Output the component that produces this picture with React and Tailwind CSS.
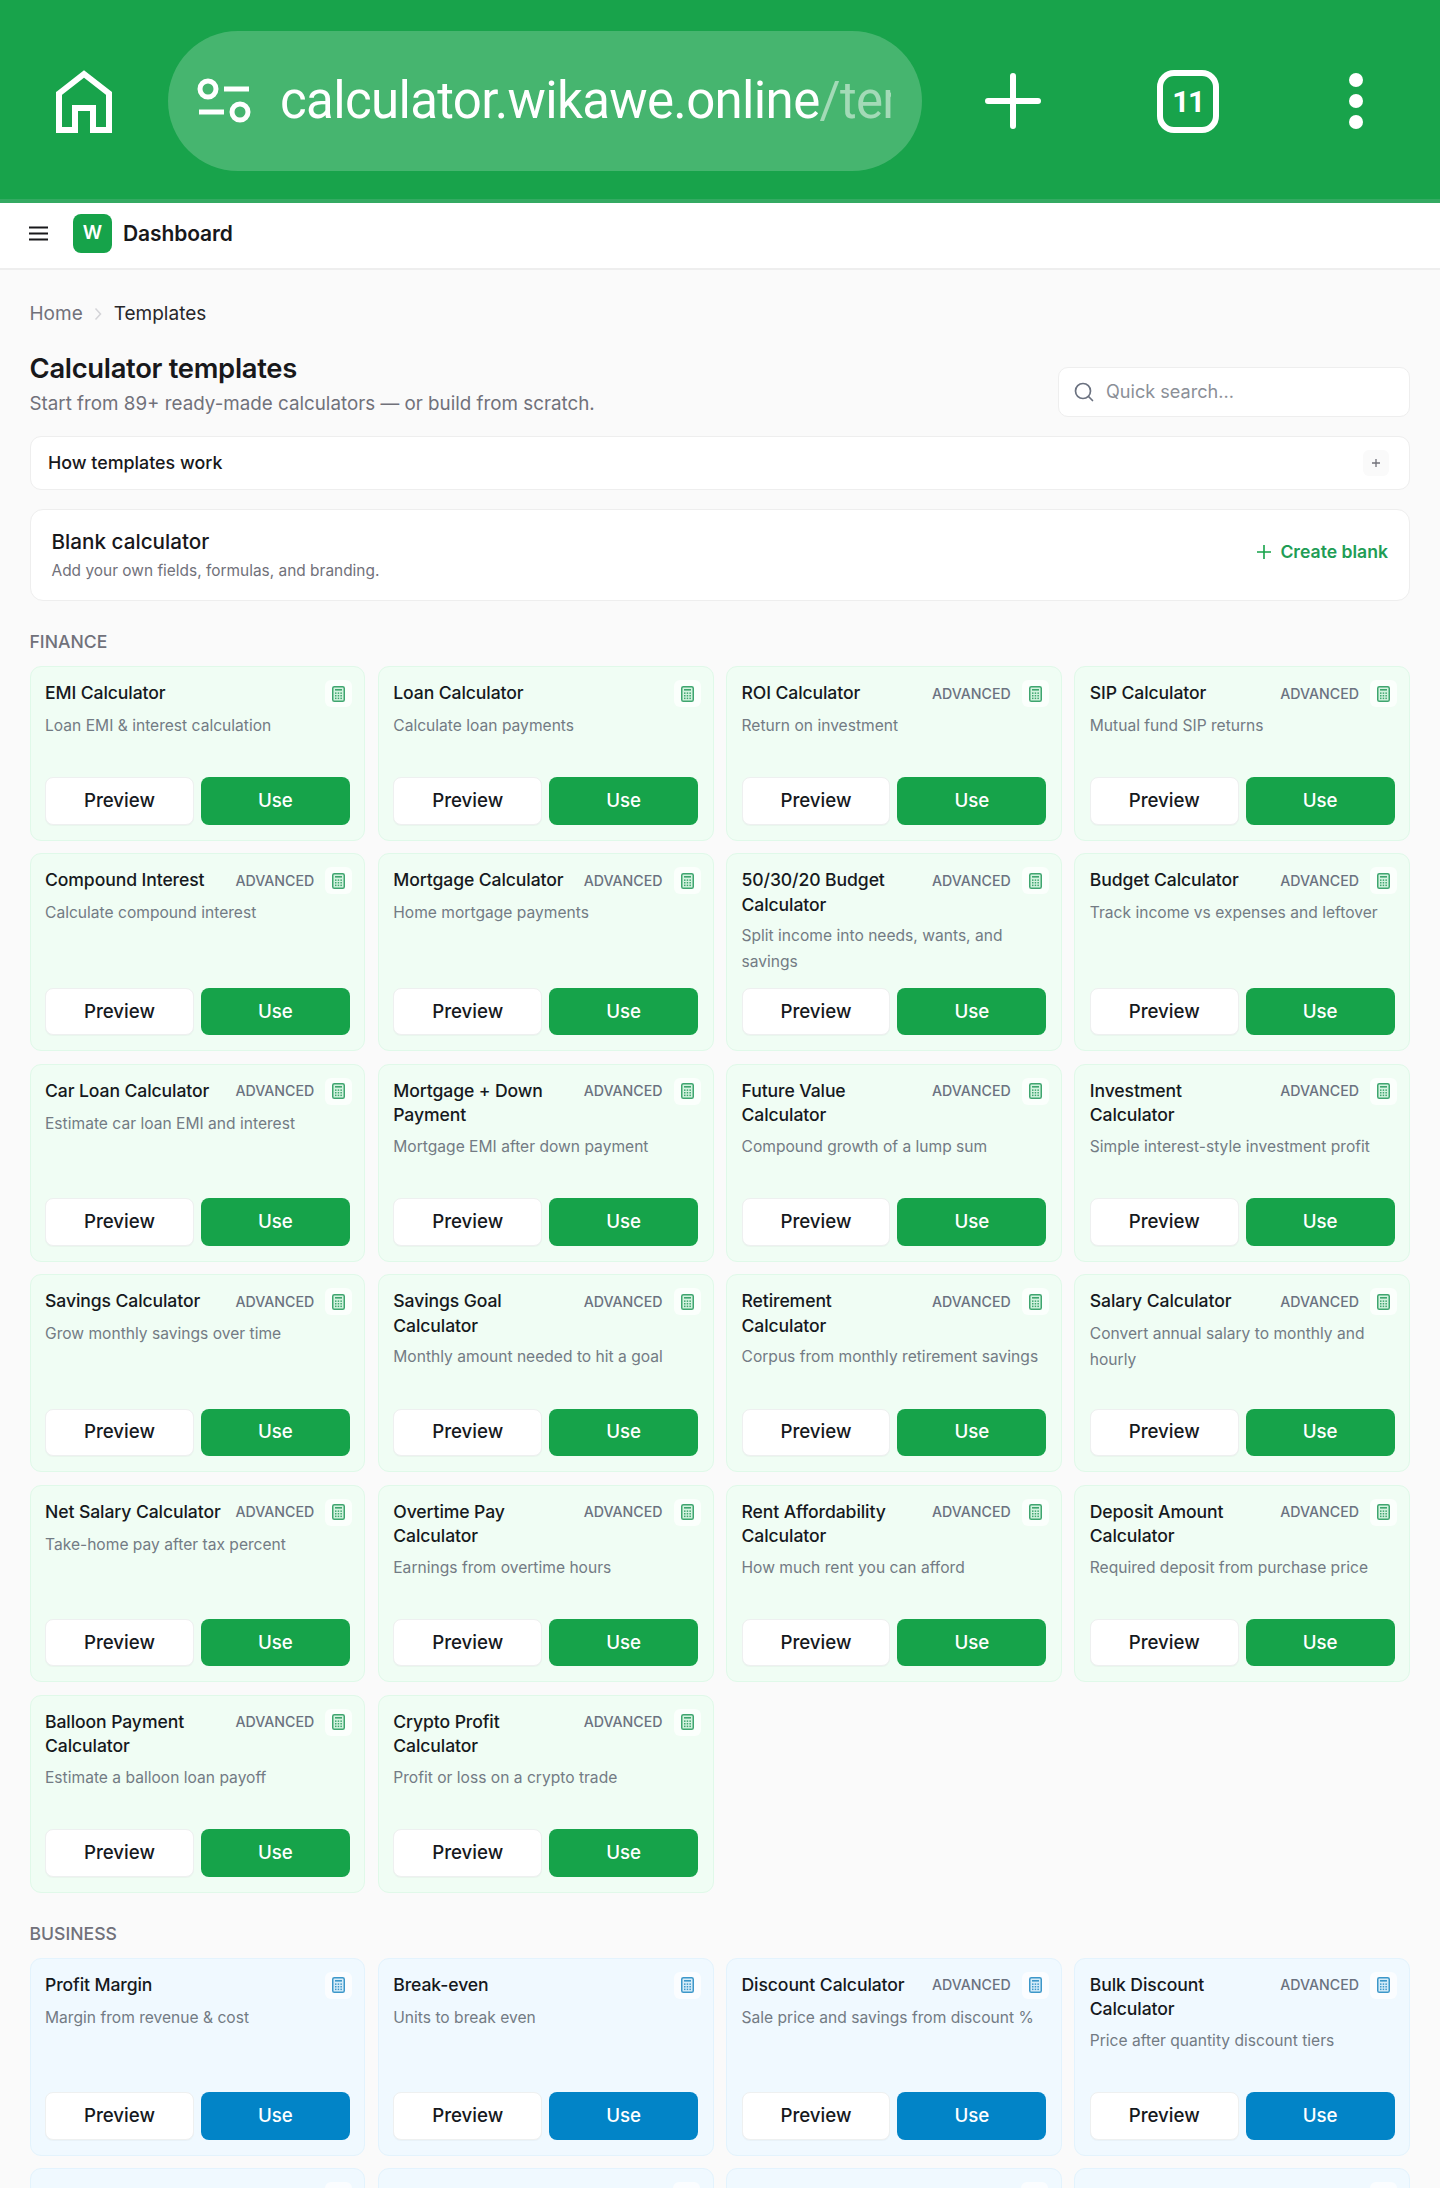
const finance = [
  ["EMI Calculator", "Loan EMI & interest calculation", false],
  ["Loan Calculator", "Calculate loan payments", false],
  ["ROI Calculator", "Return on investment", true],
  ["SIP Calculator", "Mutual fund SIP returns", true],
  ["Compound Interest", "Calculate compound interest", true],
  ["Mortgage Calculator", "Home mortgage payments", true],
  ["50/30/20 Budget\nCalculator", "Split income into needs, wants, and\nsavings", true],
  ["Budget Calculator", "Track income vs expenses and leftover", true],
  ["Car Loan Calculator", "Estimate car loan EMI and interest", true],
  ["Mortgage + Down\nPayment", "Mortgage EMI after down payment", true],
  ["Future Value\nCalculator", "Compound growth of a lump sum", true],
  ["Investment\nCalculator", "Simple interest-style investment profit", true],
  ["Savings Calculator", "Grow monthly savings over time", true],
  ["Savings Goal\nCalculator", "Monthly amount needed to hit a goal", true],
  ["Retirement\nCalculator", "Corpus from monthly retirement savings", true],
  ["Salary Calculator", "Convert annual salary to monthly and\nhourly", true],
  ["Net Salary Calculator", "Take-home pay after tax percent", true],
  ["Overtime Pay\nCalculator", "Earnings from overtime hours", true],
  ["Rent Affordability\nCalculator", "How much rent you can afford", true],
  ["Deposit Amount\nCalculator", "Required deposit from purchase price", true],
  ["Balloon Payment\nCalculator", "Estimate a balloon loan payoff", true],
  ["Crypto Profit\nCalculator", "Profit or loss on a crypto trade", true],
];

const business = [
  ["Profit Margin", "Margin from revenue & cost", false],
  ["Break-even", "Units to break even", false],
  ["Discount Calculator", "Sale price and savings from discount %", true],
  ["Bulk Discount\nCalculator", "Price after quantity discount tiers", true],
];

function CalcIcon({ blue }) {
  const stroke = blue ? "#3d97c9" : "#3fa56f";
  const fill = blue ? "#d5ecf9" : "#d3f3df";
  return (
    <svg width="13" height="16" viewBox="0 0 13 16" fill="none">
      <rect x="0.75" y="0.75" width="11.5" height="14.5" rx="1.6" fill={fill} stroke={stroke} strokeWidth="1.5" />
      <rect x="3" y="3" width="7" height="1.6" fill={stroke} />
      {[6.4, 9, 11.6].map((y) =>
        [3, 5.7, 8.4].map((x) => <rect key={`${x}-${y}`} x={x} y={y} width="1.5" height="1.5" fill={stroke} />)
      )}
    </svg>
  );
}

function IconBox({ blue }) {
  return (
    <span className="flex h-[27px] w-[27px] shrink-0 items-center justify-center rounded-[6px] bg-white/70">
      <CalcIcon blue={blue} />
    </span>
  );
}

function Card({ title, desc, adv, blue }) {
  return (
    <div
      className={
        blue
          ? "flex flex-col rounded-[11px] border border-[#e3f3fd] bg-[#f0f9ff] px-[14.5px] pt-[13px] pb-[15px]"
          : "flex flex-col rounded-[11px] border border-[#e0f9e9] bg-[#f0fdf4] px-[14.5px] pt-[13px] pb-[15px]"
      }
    >
      <div className="flex items-start justify-between">
        <h3 className="mt-[1px] text-[17.6px] leading-[24.5px] font-medium tracking-[-0.1px] whitespace-pre-line text-[#16191d]">
          {title}
        </h3>
        <div className="mr-[-2.5px] flex shrink-0 items-center gap-[11px]">
          {adv && <span className="text-[14.2px] leading-[20px] font-medium text-[#6b7280]">ADVANCED</span>}
          <IconBox blue={blue} />
        </div>
      </div>
      <p className="mt-[6px] min-h-[51.4px] text-[15.6px] leading-[25.7px] whitespace-pre-line text-[#737b84]">
        {desc}
      </p>
      <div className="mt-auto grid grid-cols-2 gap-[7px] pt-[13px]">
        <button className="flex h-[47.5px] items-center justify-center rounded-[8px] border border-[#eef0f0] bg-white text-[18.7px] font-medium text-[#16191d] shadow-[0_1px_1px_rgba(0,0,0,0.03)]">
          Preview
        </button>
        <button
          className={
            blue
              ? "flex h-[47.5px] items-center justify-center rounded-[8px] bg-[#0284c7] text-[18.7px] font-medium text-white"
              : "flex h-[47.5px] items-center justify-center rounded-[8px] bg-[#16a34a] text-[18.7px] font-medium text-white"
          }
        >
          Use
        </button>
      </div>
    </div>
  );
}

function Section({ label, items, blue }) {
  return (
    <section className="mt-[29px]">
      <h2 className="text-[17.6px] leading-[24px] font-medium text-[#71717a]">{label}</h2>
      <div className="mt-[12px] grid grid-cols-4 gap-x-[12.5px] gap-y-[12.5px]">
        {items.map(([title, desc, adv]) => (
          <Card key={title} title={title} desc={desc} adv={adv} blue={blue} />
        ))}
      </div>
    </section>
  );
}

export default function App() {
  return (
    <div className="h-[2188px] overflow-hidden bg-[#fafafa] font-[family-name:Inter,sans-serif]">
      {/* browser bar */}
      <div className="flex h-[203px] items-center border-b-[4px] border-[#34aa62] bg-[#18a34b] pt-[3px] pl-[56px]">
        <svg width="56" height="63" viewBox="0 0 56 63" fill="none" stroke="white" strokeWidth="6" className="shrink-0">
          <path d="M3 23.5 L28 4 L53 23.5 V60 H37 V38 H19 V60 H3 Z" />
        </svg>
        <div className="ml-[56px] flex h-[140px] w-[754px] shrink-0 items-center rounded-full bg-white/20 pl-[28px]">
          <svg width="56" height="46" viewBox="0 0 56 46" fill="none" stroke="white" strokeWidth="5" className="shrink-0">
            <circle cx="12" cy="11" r="8" />
            <circle cx="44" cy="34" r="8" />
            <path d="M28 11 H53 M3 34 H28" />
          </svg>
          <div className="ml-[28px] w-[611px] overflow-hidden text-[51px] leading-[70px] tracking-[-0.65px] whitespace-nowrap text-white font-[family-name:Roboto,sans-serif]">
            calculator.wikawe.online<span className="text-white/50">/templates</span>
          </div>
        </div>
        <svg width="56" height="56" viewBox="0 0 56 56" fill="none" stroke="white" strokeWidth="6" strokeLinecap="round" className="ml-[63px] shrink-0">
          <path d="M28 3 V53 M3 28 H53" />
        </svg>
        <div className="ml-[116px] flex h-[63px] w-[62px] shrink-0 items-center justify-center rounded-[17px] border-[6.5px] border-white text-[30px] font-bold tracking-[-1.5px] text-white font-[family-name:Roboto,sans-serif]">
          11
        </div>
        <div className="ml-[130px] flex shrink-0 flex-col gap-[7px]">
          <span className="h-[14px] w-[14px] rounded-full bg-white" />
          <span className="h-[14px] w-[14px] rounded-full bg-white" />
          <span className="h-[14px] w-[14px] rounded-full bg-white" />
        </div>
      </div>

      {/* app header */}
      <header className="flex h-[67px] items-center border-b-[2px] border-[#eeeeee] bg-white pb-[4px] pl-[29px]">
        <svg width="19" height="15" viewBox="0 0 19 15" fill="none" stroke="#18181b" strokeWidth="2.2" className="shrink-0">
          <path d="M0 1.5 H19 M0 7.5 H19 M0 13.5 H19" />
        </svg>
        <span className="ml-[25px] flex h-[39px] w-[39px] items-center justify-center rounded-[8px] bg-[#16a34a] text-[19px] font-semibold text-white">
          W
        </span>
        <span className="ml-[11px] text-[21px] font-semibold tracking-[-0.1px] text-[#18181b]">Dashboard</span>
      </header>

      <main className="pt-[30px] pr-[30px] pl-[29.5px]">
        {/* breadcrumb */}
        <nav className="flex h-[28px] items-center text-[19px] text-[#71717a]">
          <span>Home</span>
          <svg width="8" height="14" viewBox="0 0 8 14" fill="none" stroke="#d4d4d8" strokeWidth="1.5" className="mx-[11.5px]">
            <path d="M1.5 1.5 L6.5 7 L1.5 12.5" />
          </svg>
          <span className="text-[#27272a]">Templates</span>
        </nav>

        {/* title row */}
        <div className="mt-[20.5px] flex items-end justify-between">
          <div>
            <h1 className="text-[27.4px] leading-[38px] font-semibold tracking-[-0.3px] text-[#18181b]">Calculator templates</h1>
            <p className="mt-[3px] text-[18.8px] leading-[28px] text-[#71717a]">
              Start from 89+ ready-made calculators — or build from scratch.
            </p>
          </div>
          <div className="mb-[1px] flex h-[50px] w-[352px] items-center rounded-[10px] border border-[#eeeeee] bg-white pl-[15px]">
            <svg width="20" height="20" viewBox="0 0 20 20" fill="none" stroke="#6b7280" strokeWidth="1.7" strokeLinecap="round">
              <circle cx="9" cy="9" r="7.5" />
              <path d="M14.5 14.5 L18.5 18.5" />
            </svg>
            <span className="ml-[12px] text-[18.1px] text-[#8b8f97]">Quick search...</span>
          </div>
        </div>

        {/* how templates work */}
        <div className="mt-[18.5px] flex h-[54px] items-center justify-between rounded-[11px] border border-[#eeeeee] bg-white pr-[20px] pl-[17.5px]">
          <span className="text-[17.85px] font-medium text-[#18181b]">How templates work</span>
          <span className="flex h-[26px] w-[26px] items-center justify-center rounded-[6px] bg-[#fafafa]">
            <svg width="10" height="10" viewBox="0 0 10 10" fill="none" stroke="#71717a" strokeWidth="1.3">
              <path d="M5 1 V9 M1 5 H9" />
            </svg>
          </span>
        </div>

        {/* blank calculator */}
        <div className="mt-[18.5px] flex h-[92.5px] items-center justify-between rounded-[13px] border border-[#eeeeee] bg-white pr-[21px] pl-[21px]">
          <div>
            <div className="text-[20.7px] leading-[28px] font-medium text-[#18181b]">Blank calculator</div>
            <div className="mt-[4px] text-[15.45px] leading-[22px] text-[#71717a]">Add your own fields, formulas, and branding.</div>
          </div>
          <div className="flex items-center gap-[9px] pb-[5px]">
            <svg width="14" height="14" viewBox="0 0 14 14" fill="none" stroke="#16a34a" strokeWidth="1.6">
              <path d="M7 0 V14 M0 7 H14" />
            </svg>
            <span className="text-[17.6px] font-semibold text-[#1f9d55]">Create blank</span>
          </div>
        </div>

        <Section label="FINANCE" items={finance} />
        <Section label="BUSINESS" items={business} blue />

        {/* next row, cut off by the window */}
        <div className="mt-[12.5px] grid grid-cols-4 gap-x-[12.5px]">
          {[0, 1, 2, 3].map((i) => (
            <div key={i} className="flex h-[60px] justify-end rounded-[11px] border border-[#e3f3fd] bg-[#f0f9ff] pt-[13px] pr-[12.5px]">
              <IconBox blue />
            </div>
          ))}
        </div>
      </main>
    </div>
  );
}
